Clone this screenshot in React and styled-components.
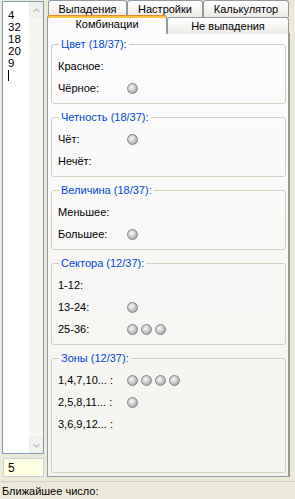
import React from "react";
import styled, { createGlobalStyle } from "styled-components";

const GlobalStyle = createGlobalStyle`
  html, body {
    margin: 0;
    padding: 0;
  }
  body {
    width: 295px;
    height: 499px;
    overflow: hidden;
    background: #ece9d8;
    font-family: "Liberation Sans", Arial, sans-serif;
    font-size: 11px;
  }
`;

const Window = styled.div`
  width: 295px;
  height: 499px;
  display: flex;
  flex-direction: column;
  background: #ece9d8;
  color: #000;
`;

const Main = styled.div`
  height: 481px;
  display: flex;
`;

// left column: memo + edit
const LeftColumn = styled.div`
  width: 42px;
  margin-left: 2px;
  padding-top: 1px;
  display: flex;
  flex-direction: column;
`;

const Memo = styled.div`
  height: 451px;
  display: flex;
  border: 1px solid #7f9db9;
  background: #fff;
`;

const MemoText = styled.div`
  flex: 1;
  padding: 7px 0 0 5px;
  font-size: 11.5px;
  line-height: 12px;
`;

const Caret = styled.div`
  width: 1px;
  height: 11px;
  margin-top: 1px;
  background: #000;
`;

const ScrollBar = styled.div`
  width: 14px;
  display: flex;
  flex-direction: column;
  justify-content: space-between;
  background: #f6f6f1;
`;

const ScrollButton = styled.div`
  height: 14px;
  display: flex;
  align-items: center;
  justify-content: center;
  border: 1px solid #e9ebef;
  border-radius: 2px;
  background: #f3f3ee;
`;

const Edit = styled.div`
  height: 17px;
  margin: 4px 0 0 1px;
  padding-left: 4px;
  display: flex;
  align-items: center;
  border: 1px solid #c9d3dc;
  background: #ffffe1;
  font-size: 12px;
`;

// right: page control
const PageControl = styled.div`
  width: 243px;
  margin-left: 3px;
  display: flex;
  flex-direction: column;
`;

const TabRow = styled.div`
  display: flex;
  height: ${(p) => p.$height}px;
  padding-left: ${(p) => p.$indent}px;
  position: relative;
  z-index: ${(p) => p.$layer};
`;

const Tab = styled.div`
  width: ${(p) => p.$width}px;
  box-sizing: border-box;
  border: 1px solid #919b9c;
  border-bottom: none;
  border-radius: 3px 3px 0 0;
  background: linear-gradient(#ffffff, #ecebe6);
  display: flex;
  align-items: center;
  justify-content: center;
  white-space: nowrap;
`;

const ActiveTab = styled(Tab)`
  height: 19px;
  margin-top: -2px;
  padding-bottom: 2px;
  border-top: 1px solid #e68b2c;
  box-shadow: inset 0 2px 0 #ffc83c;
  background: #fcfcfe;
  position: relative;
  z-index: 2;
`;

const Panel = styled.div`
  height: 444px;
  box-sizing: border-box;
  margin-top: -1px;
  padding: 4px 2px 3px 3px;
  display: flex;
  flex-direction: column;
  gap: 7px;
  border: 1px solid #919b9c;
  border-right-width: 2px;
  background: linear-gradient(#fcfcfe, #f4f3ee);
`;

const Group = styled.fieldset`
  margin: 0;
  min-width: 0;
  padding: 4px 0 4px 6px;
  border: 1px solid #d0d0bf;
  border-radius: 3px;
  flex: ${(p) => (p.$fill ? 1 : "none")};
`;

const GroupTitle = styled.legend`
  margin-left: 1px;
  padding: 0 2px;
  line-height: 13px;
  color: #0046d5;
`;

const Row = styled.div`
  height: 22px;
  display: flex;
  align-items: center;
`;

const Label = styled.span`
  width: 69px;
  flex: none;
`;

const Balls = styled.div`
  display: flex;
  gap: 3px;
`;

const Ball = styled.span`
  width: 9px;
  height: 9px;
  border-radius: 50%;
  border: 1px solid #858585;
  background: radial-gradient(
    circle at 40% 38%,
    #fafafa 0,
    #d6d6d6 35%,
    #a9a9a9 75%,
    #8c8c8c 100%
  );
`;

const StatusBar = styled.div`
  flex: 1;
  padding-left: 2px;
  display: flex;
  align-items: center;
  border-top: 1px solid #d6d2c2;
`;

const history = ["4", "32", "18", "20", "9"];

const groups = [
  {
    title: "Цвет (18/37):",
    rows: [
      ["Красное:", 0],
      ["Чёрное:", 1],
    ],
  },
  {
    title: "Четность (18/37):",
    rows: [
      ["Чёт:", 1],
      ["Нечёт:", 0],
    ],
  },
  {
    title: "Величина (18/37):",
    rows: [
      ["Меньшее:", 0],
      ["Большее:", 1],
    ],
  },
  {
    title: "Сектора (12/37):",
    rows: [
      ["1-12:", 0],
      ["13-24:", 1],
      ["25-36:", 3],
    ],
  },
  {
    title: "Зоны (12/37):",
    rows: [
      ["1,4,7,10... :", 4],
      ["2,5,8,11... :", 1],
      ["3,6,9,12... :", 0],
    ],
    fill: true,
  },
];

function Arrow({ up }) {
  return (
    <svg width="7" height="5" viewBox="0 0 7 5">
      <path
        d={up ? "M0.5 4 L3.5 1 L6.5 4" : "M0.5 1 L3.5 4 L6.5 1"}
        fill="none"
        stroke="#c4c8d0"
        strokeWidth="1.6"
      />
    </svg>
  );
}

export default function App() {
  return (
    <Window>
      <GlobalStyle />
      <Main>
        <LeftColumn>
          <Memo>
            <MemoText>
              {history.map((n, i) => (
                <div key={i}>{n}</div>
              ))}
              <Caret />
            </MemoText>
            <ScrollBar>
              <ScrollButton>
                <Arrow up />
              </ScrollButton>
              <ScrollButton>
                <Arrow />
              </ScrollButton>
            </ScrollBar>
          </Memo>
          <Edit>5</Edit>
        </LeftColumn>

        <PageControl>
          {/* back row of tabs */}
          <TabRow $height={17} $indent={1} $layer={0}>
            <Tab $width={79}>Выпадения</Tab>
            <Tab $width={76}>Настройки</Tab>
            <Tab $width={86}>Калькулятор</Tab>
          </TabRow>
          {/* front row of tabs */}
          <TabRow $height={17} $indent={0} $layer={1}>
            <ActiveTab $width={120}>Комбинации</ActiveTab>
            <Tab $width={122}>Не выпадения</Tab>
          </TabRow>
          <Panel>
            {groups.map((g) => (
              <Group key={g.title} $fill={g.fill}>
                <GroupTitle>{g.title}</GroupTitle>
                {g.rows.map(([label, count]) => (
                  <Row key={label}>
                    <Label>{label}</Label>
                    <Balls>
                      {Array.from({ length: count }, (_, i) => (
                        <Ball key={i} />
                      ))}
                    </Balls>
                  </Row>
                ))}
              </Group>
            ))}
          </Panel>
        </PageControl>
      </Main>
      <StatusBar>Ближайшее число:</StatusBar>
    </Window>
  );
}
